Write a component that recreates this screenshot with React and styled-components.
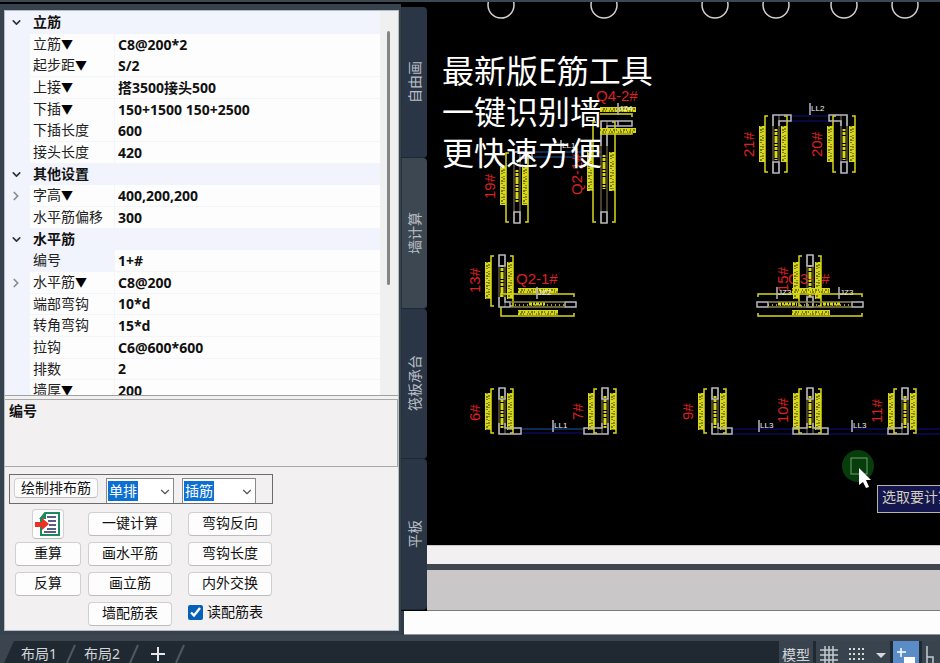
import styled, { createGlobalStyle } from "styled-components";
import { ChevronDown, ChevronRight } from "lucide-react";

const GlobalStyle = createGlobalStyle`
  * {
    box-sizing: border-box;
  }
  body {
    margin: 0;
    background: #000;
    color: #111;
    font-family: "Noto Sans", "Noto Sans CJK SC", sans-serif;
    font-size: 14px;
    line-height: 20px;
  }
  button, input, select {
    font: inherit;
    color: inherit;
    margin: 0;
  }
`;

const Page = styled.div`
  display: flex;
  flex-direction: column;
  height: 100vh;
  overflow: hidden;
  border-top: 2px solid #3b4853;
`;

const Workspace = styled.div`
  display: flex;
  flex: 1;
  min-height: 0;
`;

/* left palette */

const Palette = styled.aside`
  display: flex;
  flex: none;
  width: 401px;
  padding: 6px 2px 4px 4px;
  border-top: 2px solid #000;
  background: #36434e;
`;

const PaletteBody = styled.div`
  display: flex;
  flex-direction: column;
  flex: 1;
  min-width: 0;
  border: 1px solid #b5bcc2;
  background: #f2f0f1;
`;

const GridScroller = styled.div`
  display: flex;
  flex: none;
  height: 385px;
  overflow: hidden;
  border-bottom: 1px solid #a0a0a0;
`;

const PropertyGrid = styled.div`
  display: grid;
  flex: 1;
  grid-template-rows: repeat(18, 1fr);
  height: 391px;
  padding-top: 1px;
  background: #f1f4fc;
`;

const Scrollbar = styled.div`
  flex: none;
  width: 18px;
  height: 100%;
  padding: 20px 7px;
  background: #f0f0f1;
`;

const Thumb = styled.div`
  width: 3px;
  height: 254px;
  border-radius: 2px;
  background: #858585;
`;

const Row = styled.div`
  display: grid;
  grid-template-columns: 25px 84px 1fr;
  align-items: stretch;
  min-height: 0;
  background: #f1f4fc;
`;

const Gutter = styled.span`
  display: flex;
  align-items: center;
  justify-content: center;
  padding-right: 3px;
  color: ${(props) => (props.$dim ? "#8a8a8a" : "#333")};
`;

const Category = styled.strong`
  grid-column: 2 / 4;
  padding-left: 3px;
`;

const Name = styled.label`
  padding-left: 3px;
  border-bottom: 1px solid #f4f5f9;
  background: ${(props) => (props.$active ? "#f1f4fc" : "#fdfdfd")};
  color: #222;
  white-space: nowrap;
`;

const Arrow = styled.span`
  color: #000;
  font-size: 12px;
`;

const Value = styled.input`
  min-width: 0;
  width: 100%;
  height: 100%;
  padding: 0 3px;
  border: 0;
  border-left: 1px solid #f4f5f9;
  border-bottom: 1px solid #f4f5f9;
  background: #fdfdfd;
  font-weight: bold;
  outline: none;
`;

const Description = styled.div`
  flex: none;
  height: 68px;
  margin-top: 3px;
  padding: 1px 4px;
  border: 1px solid #a8a8a8;
  border-left: 0;
  font-weight: bold;
`;

const DrawBar = styled.div`
  display: flex;
  gap: 8px;
  flex: none;
  width: 264px;
  height: 30px;
  margin: 7px 0 5px 4px;
  padding: 3px 4px 0;
  border: 1px solid #6b6b6b;
  overflow: hidden;
`;

const Button = styled.button`
  height: ${(props) => (props.$small ? "20px" : "24px")};
  width: ${(props) => (props.$width ? props.$width + "px" : "auto")};
  padding: 0 0 2px;
  border: 1px solid #d0d0d0;
  border-bottom-color: #bcbcbc;
  border-radius: 4px;
  background: #fdfdfd;
  line-height: 18px;
  white-space: nowrap;
`;

const IconButton = styled(Button)`
  display: flex;
  align-items: center;
  justify-content: center;
  justify-self: center;
  width: 32px;
  height: 30px;
  margin: -3px 0;
  padding: 0;
`;

const ComboBox = styled.div`
  position: relative;
  flex: none;
  width: ${(props) => props.$width}px;
  height: 27px;

  svg {
    position: absolute;
    right: 2px;
    top: 7px;
    color: #555;
    pointer-events: none;
  }
`;

const Select = styled.select`
  appearance: none;
  width: 100%;
  height: 100%;
  padding: 0 2px 2px;
  border: 1px solid #8a8a8a;
  background: linear-gradient(#0b70d4, #0b70d4) 1px 2px / 30px 20px no-repeat #fff;
  color: #fff;
  outline: none;
`;

const ActionGrid = styled.div`
  display: grid;
  grid-template-columns: 66px 84px 93px;
  gap: 6px 7px;
  padding: 3px 10px;
`;

const Right = styled.div`
  display: grid;
  justify-content: end;
`;

const CheckLabel = styled.label`
  display: flex;
  align-items: center;
  gap: 4px;
  width: 84px;
  height: 20px;
  white-space: nowrap;

  input {
    width: 15px;
    height: 15px;
    flex: none;
    accent-color: #0560b8;
  }
`;

/* right part */

const Main = styled.main`
  display: flex;
  flex-direction: column;
  flex: 1;
  min-width: 0;
  background: #2f3b47;
`;

const Upper = styled.div`
  display: flex;
  flex: 1;
  min-height: 0;
  background: #000;
`;

const TabStrip = styled.nav`
  display: flex;
  flex-direction: column;
  flex: none;
  width: 26px;
  padding: 5px 0 1px;
`;

const SideTab = styled.button`
  display: flex;
  flex: 1;
  align-items: center;
  justify-content: center;
  padding: 0;
  border: 0;
  border-bottom: 1px solid #1f2933;
  border-left: 1px solid #26313c;
  border-radius: 0 4px 4px 0;
  background: ${(props) => (props.$active ? "#3c4751" : "#2a3646")};
  color: #b9bec4;

  span {
    writing-mode: vertical-rl;
    text-orientation: sideways;
    transform: rotate(180deg);
  }
`;

const Stage = styled.div`
  display: flex;
  flex-direction: column;
  flex: 1;
  min-width: 0;
`;

const Canvas = styled.div`
  position: relative;
  flex: 1;
  min-height: 0;
  overflow: hidden;
  background: #000;

  > svg {
    display: block;
  }
`;

const Caption = styled.p`
  position: absolute;
  left: 15px;
  top: 47px;
  margin: 0;
  color: #fff;
  font-family: "Noto Sans CJK SC", sans-serif;
  font-size: 32px;
  font-weight: 400;
  line-height: 41px;
  white-space: nowrap;
`;

const Tooltip = styled.div`
  position: absolute;
  left: 450px;
  top: 483px;
  height: 28px;
  padding: 1px 4px;
  border: 1px solid #b9b4a4;
  background: #14174f;
  color: #d2cdb9;
  white-space: nowrap;
`;

const HistoryStrip = styled.div`
  flex: none;
  height: 19px;
  border-top: 1px solid #c8c8c8;
  background: #f2f0f1;
`;

const Command = styled.div`
  flex: none;
  height: 47px;
  border-top: 6px solid #3f464d;
  border-bottom: 1px solid #7b7b7b;
  background: #c9c7c8;
`;

const CommandInput = styled.input`
  flex: none;
  height: 24px;
  margin-left: 3px;
  padding: 0 4px;
  border: 0;
  border-bottom: 1px solid #8e9499;
  background: #fdfdfd;
  outline: none;
`;

const StatusBar = styled.footer`
  display: flex;
  justify-content: space-between;
  flex: none;
  height: 28px;
  border-top: 6px solid #3c454f;
  background: #202932;
  color: #d3d7db;
  line-height: 26px;
  overflow: hidden;
`;

const Layouts = styled.div`
  display: flex;
`;

const LayoutTab = styled.button`
  height: 26px;
  padding: 0;
  border: 0;
  background: none;
  line-height: 26px;
`;

const Tools = styled.div`
  display: flex;
  gap: 3px;
`;

const Tool = styled.button`
  display: flex;
  align-items: center;
  justify-content: center;
  gap: 11px;
  width: ${(props) => props.$width}px;
  height: 28px;
  padding: 0;
  border: 0;
  background: ${(props) => (props.$on ? "#5a8cc8" : "#39434e")};
  overflow: hidden;
`;

const rows = [
  { category: "立筋" },
  { name: "立筋", arrow: true, value: "C8@200*2" },
  { name: "起步距", arrow: true, value: "S/2" },
  { name: "上接", arrow: true, value: "搭3500接头500" },
  { name: "下插", arrow: true, value: "150+1500 150+2500" },
  { name: "下插长度", value: "600" },
  { name: "接头长度", value: "420" },
  { category: "其他设置" },
  { name: "字高", arrow: true, value: "400,200,200", expand: true },
  { name: "水平筋偏移", value: "300" },
  { category: "水平筋" },
  { name: "编号", value: "1+#", active: true },
  { name: "水平筋", arrow: true, value: "C8@200", expand: true },
  { name: "端部弯钩", value: "10*d" },
  { name: "转角弯钩", value: "15*d" },
  { name: "拉钩", value: "C6@600*600" },
  { name: "排数", value: "2" },
  { name: "墙厚", arrow: true, value: "200" },
];

const yellow = "#d8d818";
const grey = "#b8b8c0";

// rebar note, far too small to read at this zoom
function Note({ x, y, w, h }) {
  const vertical = h > w;
  const a = vertical ? `M${x + 2} ${y}V${y + h}` : `M${x} ${y + 2}H${x + w}`;
  const b = vertical ? `M${x + 4} ${y + 2}V${y + h}` : `M${x + 2} ${y + 4}H${x + w}`;
  return (
    <g fill="none">
      <rect x={x} y={y} width={w} height={h} fill={yellow} />
      <path d={a} stroke="#1a1a00" strokeDasharray="1 2 2 1 1 3" />
      <path d={b} stroke="#3a3a00" strokeDasharray="2 1 1 3 1 1" />
    </g>
  );
}

// one vertical wall leg with its two dimension brackets
function Pier({ x, top, bottom, noteTop, noteBottom, boxAt }) {
  const boxY = boxAt === "top" ? top : bottom - 11;
  return (
    <g fill="none">
      <Note x={x - 14} y={noteTop} w={6} h={noteBottom - noteTop} />
      <Note x={x + 8} y={noteTop} w={6} h={noteBottom - noteTop} />
      <path
        d={`M${x - 5} ${top + 1}h-3V${bottom - 1}h3M${x + 11} ${top + 1}h3V${bottom - 1}h-3`}
        stroke={yellow}
        strokeWidth="1.5"
      />
      <path d={`M${x} ${top}V${bottom}M${x + 6} ${top}V${bottom}`} stroke="#8c7c60" />
      <path d={`M${x + 3} ${noteTop + 3}V${noteBottom - 2}`} stroke={yellow} strokeWidth="3" strokeDasharray="2 1 3 1 7 1" />
      <rect x={x} y={boxY} width="6" height="11" stroke={grey} strokeWidth="1.5" />
    </g>
  );
}

// beam mark such as LL1
function Beam({ x, y, children }) {
  return (
    <g>
      <path d={`M${x} ${y}v12`} stroke={grey} strokeWidth="1.5" />
      <text x={x + 1} y={y + 8} fill="#f0f0f0" fontFamily="Liberation Sans" fontSize="8">{children}</text>
    </g>
  );
}

function Mark({ x, y, turned, children }) {
  return (
    <text
      fill="#dc2020"
      fontFamily="Liberation Sans"
      fontSize="15"
      transform={`translate(${x} ${y})${turned ? " rotate(-90)" : ""}`}
    >
      {children}
    </text>
  );
}

const piers = [
  { x: 514, top: 152, bottom: 223, noteTop: 167, noteBottom: 205 },
  { x: 601, top: 121, bottom: 223, noteTop: 152, noteBottom: 191 },
  { x: 773, top: 115, bottom: 173, noteTop: 126, noteBottom: 162 },
  { x: 841, top: 115, bottom: 173, noteTop: 126, noteBottom: 162 },
  { x: 499, top: 255, bottom: 307, noteTop: 262, noteBottom: 299, boxAt: "top" },
  { x: 807, top: 255, bottom: 307, noteTop: 262, noteBottom: 299, boxAt: "top" },
  { x: 499, top: 388, bottom: 434, noteTop: 393, noteBottom: 430, boxAt: "top" },
  { x: 602, top: 388, bottom: 434, noteTop: 393, noteBottom: 430, boxAt: "top" },
  { x: 712, top: 388, bottom: 434, noteTop: 393, noteBottom: 430, boxAt: "top" },
  { x: 807, top: 388, bottom: 434, noteTop: 393, noteBottom: 430, boxAt: "top" },
  { x: 902, top: 388, bottom: 434, noteTop: 393, noteBottom: 430, boxAt: "top" },
];

function Drawing() {
  return (
    <svg width="513" height="543" viewBox="427 2 513 543" aria-hidden="true">
      <g fill="none" stroke="#d0d0d0" strokeWidth="1.5">
        {[501, 604, 715, 776, 844, 905].map((cx) => (
          <circle key={cx} cx={cx} cy="5" r="13" />
        ))}
      </g>

      <g stroke="#0a0a58" strokeWidth="1.5">
        <path d="M791 116H829M791 121H829M521 433H584" />
        <path d="M732 429H793M732 434H793M828 429H888M828 434H888M915 429H940M915 434H940" />
        <path d="M520 152H601M520 157H601M521 429H584" stroke="#123a70" />
      </g>

      <Mark x={495} y={199} turned>19#</Mark>
      <Mark x={582} y={195} turned>Q2-1#</Mark>
      <Mark x={596} y={101}>Q4-2#</Mark>
      <Mark x={754} y={157} turned>21#</Mark>
      <Mark x={822} y={157} turned>20#</Mark>
      <Mark x={480} y={293} turned>13#</Mark>
      <Mark x={516} y={284}>Q2-1#</Mark>
      <Mark x={788} y={292} turned>15#</Mark>
      <Mark x={788} y={284}>Q3-1#</Mark>
      <Mark x={480} y={421} turned>6#</Mark>
      <Mark x={583} y={420} turned>7#</Mark>
      <Mark x={693} y={420} turned>9#</Mark>
      <Mark x={788} y={423} turned>10#</Mark>
      <Mark x={882} y={423} turned>11#</Mark>

      {piers.map((pier) => (
        <Pier key={pier.x + "-" + pier.top} {...pier} />
      ))}

      {/* corner pieces */}
      <g fill="none" stroke={grey} strokeWidth="1.5">
        <path d="M773 126V115H791V121H779V126M847 126V115H829V121H841V126M514 162V152H532V158H520V162" />
        <path d="M499 423V434H521V428H505V423M608 423V434H584V428H602V423" />
        <path d="M712 423V434H732V428H718V423M807 423V428H793V434H828V428H813V423M908 423V434H888V428H902V423" />
        <path d="M601 146V121H632V126H607V146M618 121V126M499 297V307H510V302H505V297M807 297H813V307H807Z" />
        <rect x="565" y="302" width="11" height="5" />
        <rect x="757" y="302" width="11" height="5" />
        <rect x="852" y="302" width="11" height="5" />
      </g>

      {/* horizontal legs */}
      <g fill="none" stroke={yellow} strokeWidth="1.5">
        <path d="M501 297V294H574V297M501 307V316H574V313M758 297V294H862V297M758 313V316H862V313" />
        <path d="M600 114H632V117M600 134H632V131" />
        <path d="M511 302H565M511 307H565M768 302H852M768 307H852" stroke="#8c8450" />
        <path d="M515 305H565M768 305H852" strokeDasharray="1 3" />
        <path d="M529 304H545M778 304H797M823 304H840" strokeWidth="3" strokeDasharray="3 1 2 1" />
      </g>
      <Note x={518} y={288} w={40} h={5} />
      <Note x={518} y={310} w={40} h={5} />
      <Note x={792} y={288} w={38} h={5} />
      <Note x={792} y={310} w={38} h={5} />
      <Note x={600} y={107} w={36} h={5} />
      <Note x={600} y={128} w={36} h={5} />

      <Beam x={561} y={140}>LL1</Beam>
      <Beam x={618} y={103}>JZ4</Beam>
      <Beam x={810} y={103}>LL2</Beam>
      <Beam x={537} y={287}>JZ2</Beam>
      <Beam x={777} y={287}>JZ3</Beam>
      <Beam x={839} y={287}>JZ3</Beam>
      <Beam x={553} y={420}>LL1</Beam>
      <Beam x={759} y={420}>LL3</Beam>
      <Beam x={852} y={420}>LL3</Beam>

      <circle cx="858" cy="466" r="16" fill="#063d0b" />
      <rect x="851" y="458" width="16" height="16" fill="none" stroke="#6f9f72" />
      <path d="M859 468V485L863 482L866 488L869 487L866 480H871Z" fill="#fff" />
    </svg>
  );
}

function PropertyRow({ row, id }) {
  if (row.category) {
    return (
      <Row>
        <Gutter><ChevronDown size={13} strokeWidth={3} /></Gutter>
        <Category>{row.category}</Category>
      </Row>
    );
  }
  return (
    <Row>
      <Gutter $dim>{row.expand && <ChevronRight size={14} strokeWidth={3} />}</Gutter>
      <Name htmlFor={id} $active={row.active}>
        {row.name}
        {row.arrow && <Arrow>▼</Arrow>}
      </Name>
      <Value id={id} defaultValue={row.value} />
    </Row>
  );
}

function ExportIcon() {
  return (
    <svg width="26" height="26" viewBox="0 0 26 26" fill="none">
      <path d="M10 2H24V24H6V7Z" fill="#fff" stroke="#1d8a5e" strokeWidth="2" />
      <path d="M4 8L11 1V8Z" fill="#1d8a5e" />
      <path d="M12 6H21M13 10H21M14 14H21M12 18H21M9 21H21" stroke="#26265e" strokeWidth="1.5" />
      <path d="M0 11H7V7L14 13L7 19V16H0Z" fill="#ee2f24" />
    </svg>
  );
}

function Slash() {
  return (
    <svg width="10" height="22" viewBox="0 0 10 22">
      <path d="M9 4L1 22" stroke="#4d5863" strokeWidth="2" />
    </svg>
  );
}

const Edge = styled.svg`
  margin-right: 7px;
`;

const AddTab = styled(LayoutTab)`
  display: flex;
  align-items: center;
  padding: 0 10px 0 4px;
`;

const SpacedTab = styled(LayoutTab)`
  padding: 0 8px 0 9px;
`;

function App() {
  return (
    <Page>
      <GlobalStyle />
      <Workspace>
        <Palette>
          <PaletteBody>
            <GridScroller>
              <PropertyGrid>
                {rows.map((row, i) => (
                  <PropertyRow key={i} id={"prop-" + i} row={row} />
                ))}
              </PropertyGrid>
              <Scrollbar><Thumb /></Scrollbar>
            </GridScroller>
            <Description>编号</Description>
            <DrawBar>
              <Button $small $width={84}>绘制排布筋</Button>
              <ComboBox $width={68}>
                <Select aria-label="排数">
                  <option>单排</option>
                </Select>
                <ChevronDown size={14} />
              </ComboBox>
              <ComboBox $width={74}>
                <Select aria-label="钢筋类型">
                  <option>插筋</option>
                </Select>
                <ChevronDown size={14} />
              </ComboBox>
            </DrawBar>
            <ActionGrid>
              <IconButton aria-label="导出"><ExportIcon /></IconButton>
              <Button>一键计算</Button>
              <Right><Button $width={84}>弯钩反向</Button></Right>
              <Button>重算</Button>
              <Button>画水平筋</Button>
              <Right><Button $width={84}>弯钩长度</Button></Right>
              <Button>反算</Button>
              <Button>画立筋</Button>
              <Right><Button $width={84}>内外交换</Button></Right>
              <span />
              <Button>墙配筋表</Button>
              <Right>
                <CheckLabel>
                  <input type="checkbox" defaultChecked />
                  读配筋表
                </CheckLabel>
              </Right>
            </ActionGrid>
          </PaletteBody>
        </Palette>

        <Main>
          <Upper>
            <TabStrip>
              <SideTab><span>自由画</span></SideTab>
              <SideTab $active><span>墙计算</span></SideTab>
              <SideTab><span>筏板承台</span></SideTab>
              <SideTab><span>平板</span></SideTab>
            </TabStrip>
            <Stage>
              <Canvas>
                <Drawing />
                <Caption>
                  最新版E筋工具<br />
                  一键识别墙<br />
                  更快速方便
                </Caption>
                <Tooltip>选取要计算</Tooltip>
              </Canvas>
              <HistoryStrip />
              <Command />
            </Stage>
          </Upper>
          <CommandInput aria-label="命令" />
        </Main>
      </Workspace>

      <StatusBar>
        <Layouts>
          <Edge width="14" height="22" viewBox="0 0 14 22">
            <path d="M0 0H14L4 22H0Z" fill="#3c454f" />
          </Edge>
          <LayoutTab>布局1</LayoutTab>
          <SpacedTab as="span"><Slash /></SpacedTab>
          <LayoutTab>布局2</LayoutTab>
          <SpacedTab as="span"><Slash /></SpacedTab>
          <AddTab aria-label="新建布局">
            <svg width="14" height="14" viewBox="0 0 14 14">
              <path d="M7 0V14M0 7H14" stroke="#e4e6e8" strokeWidth="2" />
            </svg>
          </AddTab>
          <Slash />
        </Layouts>
        <Tools>
          <Tool $width={34}>模型</Tool>
          <Tool $width={74} aria-label="栅格">
            <svg width="18" height="18" viewBox="0 0 18 18">
              <path d="M5 0V18M9 0V18M13 0V18M0 4H18M0 9H18M0 14H18" stroke="#c5cacf" strokeWidth="1.5" />
            </svg>
            <svg width="16" height="16" viewBox="0 0 16 16" fill="#d5d9dc">
              {[0, 5, 10].map((y) => [0, 4, 9, 13].map((x) => (
                <rect key={x + "-" + y} x={x} y={y + 1} width="2" height="2" />
              )))}
            </svg>
            <svg width="10" height="5" viewBox="0 0 10 5">
              <path d="M0 0H10L5 5Z" fill="#d5d9dc" />
            </svg>
          </Tool>
          <Tool $width={26} $on aria-label="动态输入">
            <svg width="20" height="22" viewBox="0 0 20 22">
              <path d="M5 4V13M1 8H10" stroke="#fff" strokeWidth="1.5" />
              <rect x="8" y="13" width="11" height="8" fill="#fff" />
            </svg>
          </Tool>
          <Tool $width={18} aria-label="正交">
            <svg width="12" height="22" viewBox="0 0 12 22" fill="none">
              <path d="M2 2V21H12M2 13H8V21" stroke="#c5cacf" strokeWidth="1.5" />
            </svg>
          </Tool>
        </Tools>
      </StatusBar>
    </Page>
  );
}

export default App;
